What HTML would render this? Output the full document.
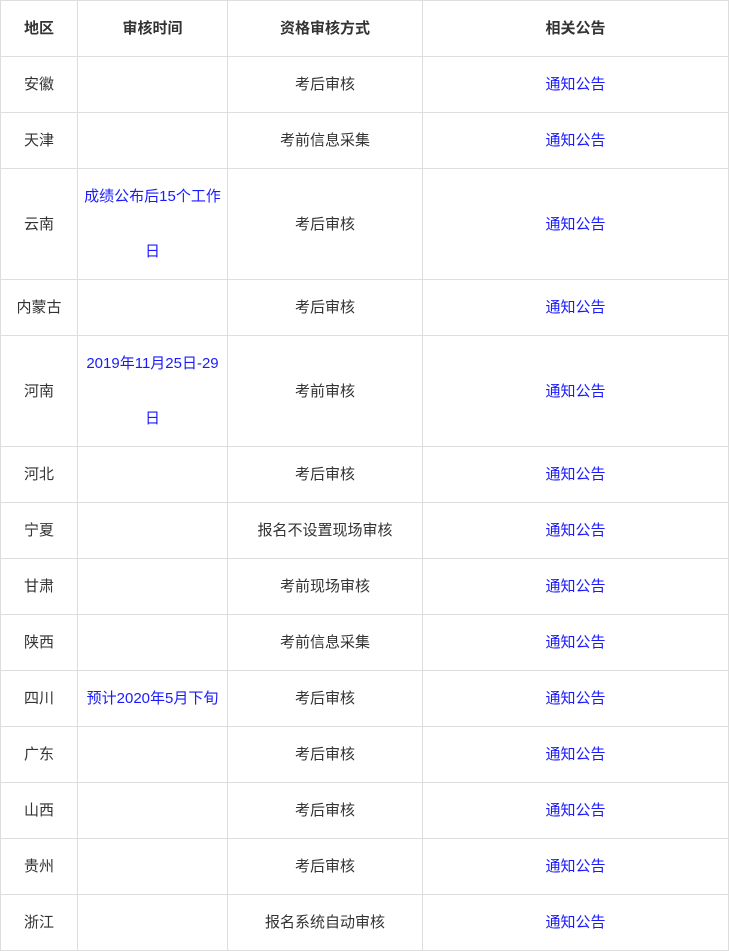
<!DOCTYPE html>
<html><head><meta charset="utf-8"><style>
html,body{margin:0;padding:0;background:#fff;}
table{border-collapse:collapse;table-layout:fixed;width:728px;font-family:"Liberation Sans","Noto Sans CJK SC",sans-serif;font-size:15px;color:#333;}
td,th{border:1px solid #ddd;padding:0;text-align:center;height:55px;line-height:55px;box-sizing:content-box;overflow:hidden;white-space:nowrap;}
th{font-weight:bold;}
td.t{height:110px;}
a{color:#1a1aff;text-decoration:none;}
.b{color:#1a1aff;}
</style></head><body>
<table>
<colgroup><col style="width:77px"><col style="width:150px"><col style="width:195px"><col style="width:306px"></colgroup>
<tr><th>地区</th><th>审核时间</th><th>资格审核方式</th><th>相关公告</th></tr>
<tr><td>安徽</td><td></td><td>考后审核</td><td><a>通知公告</a></td></tr>
<tr><td>天津</td><td></td><td>考前信息采集</td><td><a>通知公告</a></td></tr>
<tr><td class="t">云南</td><td class="t b">成绩公布后15个工作<br>日</td><td class="t">考后审核</td><td class="t"><a>通知公告</a></td></tr>
<tr><td>内蒙古</td><td></td><td>考后审核</td><td><a>通知公告</a></td></tr>
<tr><td class="t">河南</td><td class="t b">2019年11月25日-29<br>日</td><td class="t">考前审核</td><td class="t"><a>通知公告</a></td></tr>
<tr><td>河北</td><td></td><td>考后审核</td><td><a>通知公告</a></td></tr>
<tr><td>宁夏</td><td></td><td>报名不设置现场审核</td><td><a>通知公告</a></td></tr>
<tr><td>甘肃</td><td></td><td>考前现场审核</td><td><a>通知公告</a></td></tr>
<tr><td>陕西</td><td></td><td>考前信息采集</td><td><a>通知公告</a></td></tr>
<tr><td>四川</td><td class="b">预计2020年5月下旬</td><td>考后审核</td><td><a>通知公告</a></td></tr>
<tr><td>广东</td><td></td><td>考后审核</td><td><a>通知公告</a></td></tr>
<tr><td>山西</td><td></td><td>考后审核</td><td><a>通知公告</a></td></tr>
<tr><td>贵州</td><td></td><td>考后审核</td><td><a>通知公告</a></td></tr>
<tr><td>浙江</td><td></td><td>报名系统自动审核</td><td><a>通知公告</a></td></tr>
</table>
</body></html>
